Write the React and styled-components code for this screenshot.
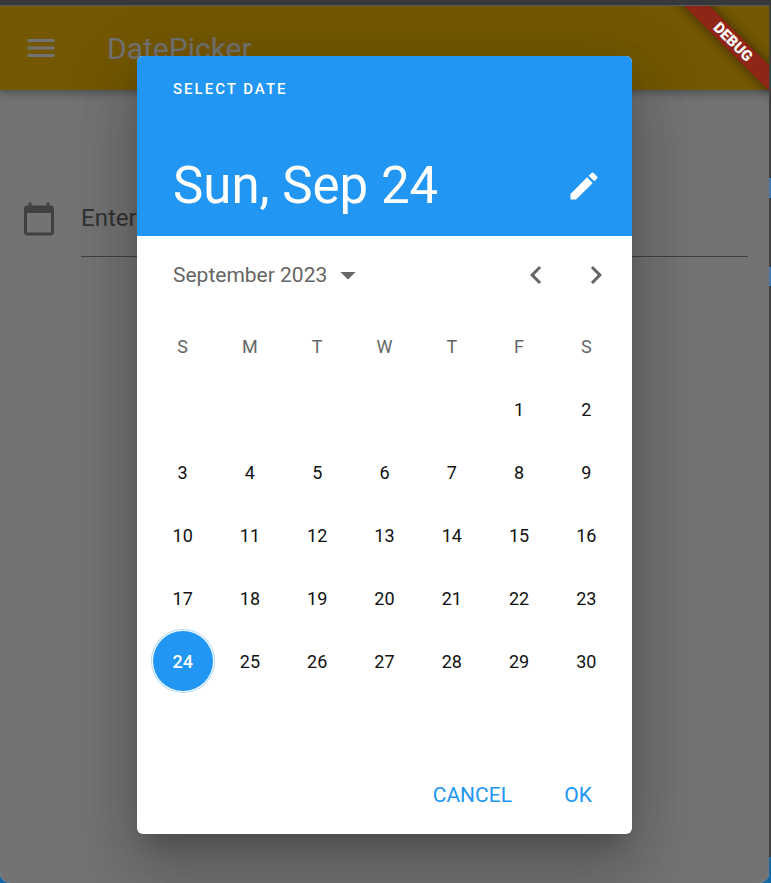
import React, { useState } from 'react';
import styled, { createGlobalStyle, css } from 'styled-components';

const BLUE = '#2196f3';

const GlobalStyle = createGlobalStyle`
  *, *::before, *::after { box-sizing: border-box; }
  body { margin: 0; font-family: Roboto, "Liberation Sans", sans-serif; }
  button, input { font: inherit; color: inherit; }
  button { border: 0; padding: 0; background: none; cursor: pointer; }
`;

const Desktop = styled.div`
  display: flex;
  min-height: 100vh;
  padding: 5px 2px 0 0;
  background:
    linear-gradient(#37383c, #37383c) top / 100% 5px no-repeat,
    linear-gradient(#4178b4, #4178b4) right 178px / 2px 20px no-repeat,
    linear-gradient(#4178b4, #4178b4) right 267px / 2px 19px no-repeat,
    linear-gradient(#3f3f3f, #3f3f3f) right top / 2px calc(100% - 26px) no-repeat,
    #1269a5;
`;

const Window = styled.div`
  position: relative;
  flex: 1;
  display: flex;
  flex-direction: column;
  overflow: hidden;
  background: #fff;
  border-top: 1px solid #5a5a5a;
  border-radius: 0 0 10px 10px;
`;

const AppBar = styled.header`
  display: flex;
  align-items: center;
  gap: 48px;
  height: 84px;
  padding: 0 23px;
  color: #fff;
  background: #ffc107;
  box-shadow: 0 3px 6px rgba(0, 0, 0, 0.2), 0 6px 10px rgba(0, 0, 0, 0.1);
`;

const Title = styled.h1`
  margin: 0;
  padding-top: 2px;
  font-size: 30px;
  line-height: 36px;
  font-weight: 400;
`;

const IconButton = styled.button`
  display: flex;
  align-items: center;
  justify-content: center;
  width: ${(p) => p.$width || 36}px;
  height: 36px;
`;

const Glyph = styled.svg`
  display: block;
  flex: none;
  width: 36px;
  height: 36px;
  fill: currentColor;
`;

const Body = styled.main`
  padding: 90px 21px;
`;

const Field = styled.label`
  display: flex;
  align-items: center;
  gap: 24px;
  color: #8e8e8e;
`;

const DateInput = styled.input`
  flex: 1;
  min-width: 0;
  height: 77px;
  padding: 0;
  border: 0;
  border-bottom: 1px solid #8e8e8e;
  outline: 0;
  background: none;
  font-size: 24px;
  &::placeholder { color: #707070; opacity: 1; }
`;

const Scrim = styled.div`
  position: absolute;
  inset: 0;
  display: flex;
  align-items: center;
  justify-content: center;
  background: rgba(0, 0, 0, 0.55);
`;

const Dialog = styled.section`
  width: 495px;
  max-width: 100%;
  overflow: hidden;
  border-radius: 6px;
  background: #fff;
  box-shadow:
    0 16px 22px -10px rgba(0, 0, 0, 0.2),
    0 36px 57px 4px rgba(0, 0, 0, 0.14),
    0 14px 69px 12px rgba(0, 0, 0, 0.12);
`;

const DialogHeader = styled.header`
  display: flex;
  flex-direction: column;
  justify-content: space-between;
  height: 180px;
  padding: 24px 30px 20px 36px;
  color: #fff;
  background: ${BLUE};
`;

const Overline = styled.span`
  font-size: 15px;
  line-height: 18px;
  font-weight: 500;
  letter-spacing: 2px;
`;

const HeadlineRow = styled.div`
  display: flex;
  align-items: center;
  justify-content: space-between;
`;

const Headline = styled.h2`
  margin: 0;
  font-size: 51px;
  line-height: 60px;
  font-weight: 400;
`;

const MonthBar = styled.div`
  display: flex;
  align-items: center;
  height: 79px;
  padding: 0 6px 0 36px;
  color: #666;
`;

const MonthButton = styled.button`
  display: flex;
  align-items: center;
  gap: 3px;
  margin-right: auto;
  font-size: 21px;
  line-height: 24px;
`;

const Calendar = styled.table`
  width: calc(100% - 24px);
  margin: 0 12px;
  table-layout: fixed;
  border-collapse: collapse;
  font-size: 18px;
  line-height: 21px;
  text-align: center;
`;

const Weekday = styled.th`
  height: 63px;
  padding: 0;
  font-weight: 400;
  color: #666;
`;

const DayCell = styled.td`
  height: 63px;
  padding: 0;
`;

const Day = styled.button`
  width: 60px;
  height: 60px;
  border-radius: 50%;
  color: #111;
  ${(p) => p.$selected && css`
    color: #fff;
    font-weight: 500;
    background: ${BLUE};
    box-shadow: 0 0 0 1px #fff, 0 0 0 2px #b0d9fb;
  `}
`;

const Actions = styled.footer`
  display: flex;
  align-items: center;
  justify-content: flex-end;
  gap: 6px;
  height: 78px;
  padding-right: 6px;
`;

const TextButton = styled.button`
  min-width: 96px;
  height: 54px;
  padding: 0 12px;
  font-size: 21px;
  color: ${BLUE};
`;

const RibbonCorner = styled.div`
  position: absolute;
  top: 0;
  right: 0;
  width: 120px;
  height: 120px;
  overflow: hidden;
  pointer-events: none;
`;

const Ribbon = styled.div`
  position: absolute;
  top: 27px;
  right: -34px;
  width: 140px;
  height: 18px;
  transform: rotate(45deg);
  background: #8f2517;
  box-shadow: 0 0 12px rgba(0, 0, 0, 0.5);
  color: #fff;
  font-size: 15px;
  line-height: 18px;
  font-weight: 900;
  text-align: center;
`;

const ICONS = {
  menu: 'M3 18h18v-2H3v2zm0-5h18v-2H3v2zm0-7v2h18V6H3z',
  calendar: 'M20 3h-1V1h-2v2H7V1H5v2H4c-1.1 0-2 .9-2 2v16c0 1.1.9 2 2 2h16c1.1 0 2-.9 2-2V5c0-1.1-.9-2-2-2zm0 18H4V8h16v13z',
  edit: 'M3 17.25V21h3.75L17.81 9.94l-3.75-3.75L3 17.25zM20.71 7.04a1 1 0 0 0 0-1.41l-2.34-2.34a1 1 0 0 0-1.41 0l-1.83 1.83 3.75 3.75 1.83-1.83z',
  left: 'M15.41 7.41L14 6l-6 6 6 6 1.41-1.41L10.83 12z',
  right: 'M10 6L8.59 7.41 13.17 12l-4.58 4.59L10 18l6-6z',
  down: 'M7 10l5 5 5-5z',
};

const Icon = ({ name }) => (
  <Glyph viewBox="0 0 24 24" aria-hidden="true">
    <path d={ICONS[name]} />
  </Glyph>
);

const WEEKDAYS = ['S', 'M', 'T', 'W', 'T', 'F', 'S'];
const FIRST_WEEKDAY = 5;
const DAYS_IN_MONTH = 30;
const WEEKS = Array.from({ length: 6 }, (_, w) =>
  Array.from({ length: 7 }, (_, d) => {
    const day = w * 7 + d - FIRST_WEEKDAY + 1;
    return day > 0 && day <= DAYS_IN_MONTH ? day : null;
  })
);
const NAMES = ['Sun', 'Mon', 'Tue', 'Wed', 'Thu', 'Fri', 'Sat'];

export default function App() {
  const [selected, setSelected] = useState(24);
  const weekday = NAMES[(selected + FIRST_WEEKDAY - 1) % 7];

  return (
    <>
      <GlobalStyle />
      <Desktop>
        <Window>
          <AppBar>
            <IconButton aria-label="Menu"><Icon name="menu" /></IconButton>
            <Title>DatePicker</Title>
          </AppBar>
          <Body>
            <Field>
              <Icon name="calendar" />
              <DateInput placeholder="Enter Date" aria-label="Enter Date" />
            </Field>
          </Body>
          <Scrim>
            <Dialog role="dialog" aria-label="Select date">
              <DialogHeader>
                <Overline>SELECT DATE</Overline>
                <HeadlineRow>
                  <Headline>{weekday}, Sep {selected}</Headline>
                  <IconButton aria-label="Edit date"><Icon name="edit" /></IconButton>
                </HeadlineRow>
              </DialogHeader>
              <MonthBar>
                <MonthButton>
                  September 2023
                  <Icon name="down" />
                </MonthButton>
                <IconButton $width={60} aria-label="Previous month"><Icon name="left" /></IconButton>
                <IconButton $width={60} aria-label="Next month"><Icon name="right" /></IconButton>
              </MonthBar>
              <Calendar>
                <thead>
                  <tr>{WEEKDAYS.map((d, i) => <Weekday key={i} scope="col">{d}</Weekday>)}</tr>
                </thead>
                <tbody>
                  {WEEKS.map((week, w) => (
                    <tr key={w}>
                      {week.map((day, d) => (
                        <DayCell key={d}>
                          {day && (
                            <Day $selected={day === selected} onClick={() => setSelected(day)}>
                              {day}
                            </Day>
                          )}
                        </DayCell>
                      ))}
                    </tr>
                  ))}
                </tbody>
              </Calendar>
              <Actions>
                <TextButton>CANCEL</TextButton>
                <TextButton>OK</TextButton>
              </Actions>
            </Dialog>
          </Scrim>
          <RibbonCorner>
            <Ribbon>DEBUG</Ribbon>
          </RibbonCorner>
        </Window>
      </Desktop>
    </>
  );
}
